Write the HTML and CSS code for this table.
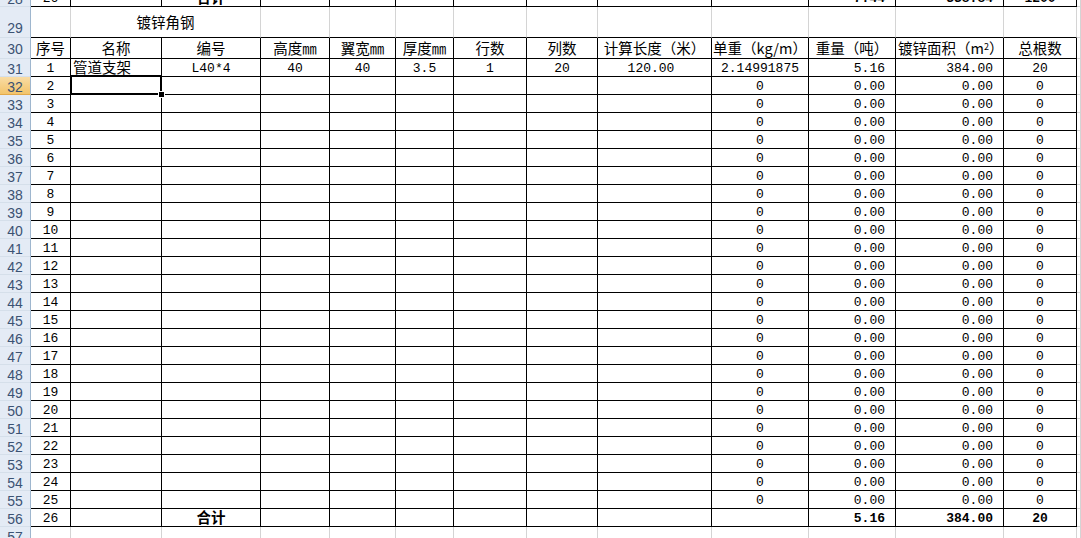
FILE: index.html
```html
<!DOCTYPE html>
<html lang="zh">
<head>
<meta charset="utf-8">
<title>镀锌角钢</title>
<link rel="stylesheet" href="styles.css">
</head>
<body>
<div class="sheet">
  <div class="row">
    <span class="h">28</span><span>26</span><span></span><span class="zh b">合计</span><span></span><span></span><span></span><span></span><span></span><span></span><span></span><span class="r b">7.44</span><span class="r b">338.84</span><span class="b">1200</span><span class="x"></span>
  </div>
  <div class="row title">
    <span class="h hb">29</span><span class="g"></span><span class="g span2 zh">镀锌角钢</span><span class="g"></span><span class="g"></span><span class="g"></span><span class="g"></span><span class="g"></span><span class="g"></span><span class="g"></span><span class="g"></span><span class="g"></span><span class="g"></span><span class="x"></span>
  </div>
  <div class="row head">
    <span class="h">30</span><span class="zh">序号</span><span class="zh">名称</span><span class="zh">编号</span><span class="zh">高度㎜</span><span class="zh">翼宽㎜</span><span class="zh">厚度㎜</span><span class="zh">行数</span><span class="zh">列数</span><span class="zh">计算长度（米）</span><span class="zh">单重（kg/m）</span><span class="zh">重量（吨）</span><span class="zh l">镀锌面积（m<sup>2</sup>）</span><span class="zh">总根数</span><span class="x"></span>
  </div>
  <div class="row">
    <span class="h">31</span><span>1</span><span class="zh l">管道支架</span><span>L40*4</span><span>40</span><span>40</span><span>3.5</span><span>1</span><span>20</span><span class="pr">120.00</span><span>2.14991875</span><span class="r">5.16</span><span class="r">384.00</span><span>20</span><span class="x"></span>
  </div>
  <div class="row">
    <span class="h hs">32</span><span>2</span><span class="sel"></span><span></span><span></span><span></span><span></span><span></span><span></span><span></span><span>0</span><span class="r">0.00</span><span class="r">0.00</span><span>0</span><span class="x"></span>
  </div>
  <div class="row"><span class="h">33</span><span>3</span><span></span><span></span><span></span><span></span><span></span><span></span><span></span><span></span><span>0</span><span class="r">0.00</span><span class="r">0.00</span><span>0</span><span class="x"></span></div>
  <div class="row"><span class="h">34</span><span>4</span><span></span><span></span><span></span><span></span><span></span><span></span><span></span><span></span><span>0</span><span class="r">0.00</span><span class="r">0.00</span><span>0</span><span class="x"></span></div>
  <div class="row"><span class="h">35</span><span>5</span><span></span><span></span><span></span><span></span><span></span><span></span><span></span><span></span><span>0</span><span class="r">0.00</span><span class="r">0.00</span><span>0</span><span class="x"></span></div>
  <div class="row"><span class="h">36</span><span>6</span><span></span><span></span><span></span><span></span><span></span><span></span><span></span><span></span><span>0</span><span class="r">0.00</span><span class="r">0.00</span><span>0</span><span class="x"></span></div>
  <div class="row"><span class="h">37</span><span>7</span><span></span><span></span><span></span><span></span><span></span><span></span><span></span><span></span><span>0</span><span class="r">0.00</span><span class="r">0.00</span><span>0</span><span class="x"></span></div>
  <div class="row"><span class="h">38</span><span>8</span><span></span><span></span><span></span><span></span><span></span><span></span><span></span><span></span><span>0</span><span class="r">0.00</span><span class="r">0.00</span><span>0</span><span class="x"></span></div>
  <div class="row"><span class="h">39</span><span>9</span><span></span><span></span><span></span><span></span><span></span><span></span><span></span><span></span><span>0</span><span class="r">0.00</span><span class="r">0.00</span><span>0</span><span class="x"></span></div>
  <div class="row"><span class="h">40</span><span>10</span><span></span><span></span><span></span><span></span><span></span><span></span><span></span><span></span><span>0</span><span class="r">0.00</span><span class="r">0.00</span><span>0</span><span class="x"></span></div>
  <div class="row"><span class="h">41</span><span>11</span><span></span><span></span><span></span><span></span><span></span><span></span><span></span><span></span><span>0</span><span class="r">0.00</span><span class="r">0.00</span><span>0</span><span class="x"></span></div>
  <div class="row"><span class="h">42</span><span>12</span><span></span><span></span><span></span><span></span><span></span><span></span><span></span><span></span><span>0</span><span class="r">0.00</span><span class="r">0.00</span><span>0</span><span class="x"></span></div>
  <div class="row"><span class="h">43</span><span>13</span><span></span><span></span><span></span><span></span><span></span><span></span><span></span><span></span><span>0</span><span class="r">0.00</span><span class="r">0.00</span><span>0</span><span class="x"></span></div>
  <div class="row"><span class="h">44</span><span>14</span><span></span><span></span><span></span><span></span><span></span><span></span><span></span><span></span><span>0</span><span class="r">0.00</span><span class="r">0.00</span><span>0</span><span class="x"></span></div>
  <div class="row"><span class="h">45</span><span>15</span><span></span><span></span><span></span><span></span><span></span><span></span><span></span><span></span><span>0</span><span class="r">0.00</span><span class="r">0.00</span><span>0</span><span class="x"></span></div>
  <div class="row"><span class="h">46</span><span>16</span><span></span><span></span><span></span><span></span><span></span><span></span><span></span><span></span><span>0</span><span class="r">0.00</span><span class="r">0.00</span><span>0</span><span class="x"></span></div>
  <div class="row"><span class="h">47</span><span>17</span><span></span><span></span><span></span><span></span><span></span><span></span><span></span><span></span><span>0</span><span class="r">0.00</span><span class="r">0.00</span><span>0</span><span class="x"></span></div>
  <div class="row"><span class="h">48</span><span>18</span><span></span><span></span><span></span><span></span><span></span><span></span><span></span><span></span><span>0</span><span class="r">0.00</span><span class="r">0.00</span><span>0</span><span class="x"></span></div>
  <div class="row"><span class="h">49</span><span>19</span><span></span><span></span><span></span><span></span><span></span><span></span><span></span><span></span><span>0</span><span class="r">0.00</span><span class="r">0.00</span><span>0</span><span class="x"></span></div>
  <div class="row"><span class="h">50</span><span>20</span><span></span><span></span><span></span><span></span><span></span><span></span><span></span><span></span><span>0</span><span class="r">0.00</span><span class="r">0.00</span><span>0</span><span class="x"></span></div>
  <div class="row"><span class="h">51</span><span>21</span><span></span><span></span><span></span><span></span><span></span><span></span><span></span><span></span><span>0</span><span class="r">0.00</span><span class="r">0.00</span><span>0</span><span class="x"></span></div>
  <div class="row"><span class="h">52</span><span>22</span><span></span><span></span><span></span><span></span><span></span><span></span><span></span><span></span><span>0</span><span class="r">0.00</span><span class="r">0.00</span><span>0</span><span class="x"></span></div>
  <div class="row"><span class="h">53</span><span>23</span><span></span><span></span><span></span><span></span><span></span><span></span><span></span><span></span><span>0</span><span class="r">0.00</span><span class="r">0.00</span><span>0</span><span class="x"></span></div>
  <div class="row"><span class="h">54</span><span>24</span><span></span><span></span><span></span><span></span><span></span><span></span><span></span><span></span><span>0</span><span class="r">0.00</span><span class="r">0.00</span><span>0</span><span class="x"></span></div>
  <div class="row"><span class="h">55</span><span>25</span><span></span><span></span><span></span><span></span><span></span><span></span><span></span><span></span><span>0</span><span class="r">0.00</span><span class="r">0.00</span><span>0</span><span class="x"></span></div>
  <div class="row"><span class="h">56</span><span>26</span><span></span><span class="zh b">合计</span><span></span><span></span><span></span><span></span><span></span><span></span><span></span><span class="r b">5.16</span><span class="r b">384.00</span><span class="b">20</span><span class="x"></span></div>
  <div class="row blank"><span class="h">57</span><span></span><span></span><span></span><span></span><span></span><span></span><span></span><span></span><span></span><span></span><span></span><span></span><span></span><span></span></div>
</div>
</body>
</html>
```

FILE: styles.css
```css
html, body {
  margin: 0;
  padding: 0;
  background: #fff;
  width: 1081px;
  height: 538px;
  overflow: hidden;
}

.sheet {
  margin-top: -11px;
}

.row {
  display: grid;
  grid-template-columns: 31px 40px 91px 99px 69px 66px 58px 73px 71px 114px 97px 87px 108px 73px 1fr;
  height: 18px;
}

.row > span {
  box-sizing: border-box;
  border-right: 1px solid #000;
  border-bottom: 1px solid #000;
  display: flex;
  align-items: center;
  justify-content: center;
  padding-top: 2px;
  font-family: "Liberation Mono", "Noto Sans CJK SC", monospace;
  font-size: 13px;
  line-height: 1;
  color: #000;
  white-space: nowrap;
}

.row.title { height: 31px; }
.row.head { height: 21px; }

.row > .h {
  background: #e4ebf5;
  border-right: 1px solid #9eb6ce;
  border-bottom: 1px solid #d5dfea;
  font-family: "Liberation Sans", sans-serif;
  font-size: 14px;
  color: #3b5273;
}

.row > .hb {
  align-items: flex-end;
  padding-bottom: 2px;
}

.row > .hs {
  background: linear-gradient(#f9dca4, #f2c46b);
  border-bottom-color: #e3a94a;
}

.row > .g {
  border-right-color: #d4d4d4;
  border-bottom-color: #000;
}

.row.title > .span2 {
  grid-column: span 2;
  padding-top: 0;
}

.row > .x {
  border-right-color: #d4d4d4;
  border-bottom-color: #d4d4d4;
}

.row.blank > span:not(.h) {
  border-right-color: #d4d4d4;
  border-bottom-color: #d4d4d4;
}

.row > .zh {
  font-family: "Noto Sans CJK SC", sans-serif;
  font-size: 14.5px;
  padding-top: 0;
}

.row > .l {
  justify-content: flex-start;
  padding-left: 2px;
}

.row > .r {
  justify-content: flex-end;
  padding-right: 10px;
}

.row > .pr {
  padding-right: 7px;
}

.row > .b {
  font-weight: bold;
}

sup {
  font-size: 9px;
  line-height: 0;
  position: relative;
  top: -1px;
}

.row > .sel {
  position: relative;
}

.sel::after {
  content: "";
  position: absolute;
  left: -1px;
  top: -2px;
  right: -1px;
  bottom: -1px;
  border: 2px solid #000;
}

.sel::before {
  content: "";
  position: absolute;
  right: -4px;
  bottom: -4px;
  width: 5px;
  height: 5px;
  background: #000;
  border: 1px solid #fff;
  z-index: 2;
}
```
